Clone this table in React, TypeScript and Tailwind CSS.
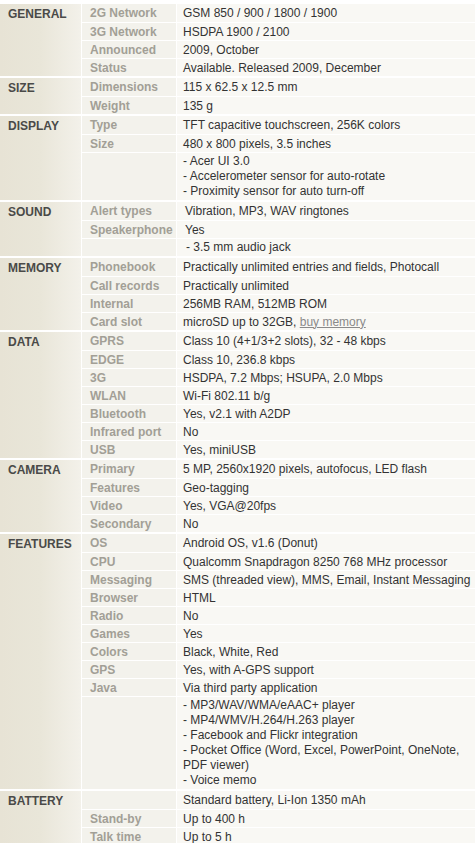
import React from 'react';

type Row = { label: string; value: React.ReactNode };
type Section = { title: string; rows: Row[]; notes?: string[]; shift?: boolean };

const sections: Section[] = [
  {
    title: 'GENERAL',
    rows: [
      { label: '2G Network', value: 'GSM 850 / 900 / 1800 / 1900' },
      { label: '3G Network', value: 'HSDPA 1900 / 2100' },
      { label: 'Announced', value: '2009, October' },
      { label: 'Status', value: 'Available. Released 2009, December' },
    ],
  },
  {
    title: 'SIZE',
    rows: [
      { label: 'Dimensions', value: '115 x 62.5 x 12.5 mm' },
      { label: 'Weight', value: '135 g' },
    ],
  },
  {
    title: 'DISPLAY',
    rows: [
      { label: 'Type', value: 'TFT capacitive touchscreen, 256K colors' },
      { label: 'Size', value: '480 x 800 pixels, 3.5 inches' },
    ],
    notes: ['- Acer UI 3.0', '- Accelerometer sensor for auto-rotate', '- Proximity sensor for auto turn-off'],
  },
  {
    title: 'SOUND',
    shift: true,
    rows: [
      { label: 'Alert types', value: 'Vibration, MP3, WAV ringtones' },
      { label: 'Speakerphone', value: 'Yes' },
    ],
    notes: ['- 3.5 mm audio jack'],
  },
  {
    title: 'MEMORY',
    rows: [
      { label: 'Phonebook', value: 'Practically unlimited entries and fields, Photocall' },
      { label: 'Call records', value: 'Practically unlimited' },
      { label: 'Internal', value: '256MB RAM, 512MB ROM' },
      {
        label: 'Card slot',
        value: (
          <span>
            microSD up to 32GB, <a className="text-[#8a8a8a] underline">buy memory</a>
          </span>
        ),
      },
    ],
  },
  {
    title: 'DATA',
    rows: [
      { label: 'GPRS', value: 'Class 10 (4+1/3+2 slots), 32 - 48 kbps' },
      { label: 'EDGE', value: 'Class 10, 236.8 kbps' },
      { label: '3G', value: 'HSDPA, 7.2 Mbps; HSUPA, 2.0 Mbps' },
      { label: 'WLAN', value: 'Wi-Fi 802.11 b/g' },
      { label: 'Bluetooth', value: 'Yes, v2.1 with A2DP' },
      { label: 'Infrared port', value: 'No' },
      { label: 'USB', value: 'Yes, miniUSB' },
    ],
  },
  {
    title: 'CAMERA',
    rows: [
      { label: 'Primary', value: '5 MP, 2560x1920 pixels, autofocus, LED flash' },
      { label: 'Features', value: 'Geo-tagging' },
      { label: 'Video', value: 'Yes, VGA@20fps' },
      { label: 'Secondary', value: 'No' },
    ],
  },
  {
    title: 'FEATURES',
    rows: [
      { label: 'OS', value: 'Android OS, v1.6 (Donut)' },
      { label: 'CPU', value: 'Qualcomm Snapdragon 8250 768 MHz processor' },
      { label: 'Messaging', value: 'SMS (threaded view), MMS, Email, Instant Messaging' },
      { label: 'Browser', value: 'HTML' },
      { label: 'Radio', value: 'No' },
      { label: 'Games', value: 'Yes' },
      { label: 'Colors', value: 'Black, White, Red' },
      { label: 'GPS', value: 'Yes, with A-GPS support' },
      { label: 'Java', value: 'Via third party application' },
    ],
    notes: [
      '- MP3/WAV/WMA/eAAC+ player',
      '- MP4/WMV/H.264/H.263 player',
      '- Facebook and Flickr integration',
      '- Pocket Office (Word, Excel, PowerPoint, OneNote, PDF viewer)',
      '- Voice memo',
    ],
  },
  {
    title: 'BATTERY',
    rows: [
      { label: '', value: 'Standard battery, Li-Ion 1350 mAh' },
      { label: 'Stand-by', value: 'Up to 400 h' },
      { label: 'Talk time', value: 'Up to 5 h' },
    ],
  },
];

const SpecSection: React.FC<{ section: Section }> = ({ section }) => (
  <div className="flex border-t-2 border-white">
    <div className="w-[81px] shrink-0 bg-gradient-to-r from-[#e7e3d5] via-[#e9e6d9] to-[#f3f1ea] pl-[8px] pt-[3px] font-bold text-[#4a4a48]">
      {section.title}
    </div>
    <div className="flex-1 min-w-0 border-l border-white">
      {section.rows.map((row, i) => (
        <div key={i} className={`flex h-[18px] items-center ${i > 0 ? 'border-t border-white' : ''}`}>
          <div className="w-[94px] shrink-0 self-stretch flex items-center bg-[#f3f2ec] pl-[8px] font-bold text-[#a29f96]">
            {row.label}
          </div>
          <div className={`flex-1 self-stretch flex items-center whitespace-nowrap border-l border-white bg-[#f9f8f4] text-[#333] ${section.shift ? 'pl-[8px]' : 'pl-[6px]'}`}>
            {row.value}
          </div>
        </div>
      ))}
      {section.notes && (
        <div className="flex border-t border-white">
          <div className="w-[94px] shrink-0 bg-[#f3f2ec]" />
          <div className={`flex-1 border-l border-white bg-[#f9f8f4] pt-[1px] pb-[1px] pr-[4px] leading-[15px] text-[#333] ${section.shift ? 'pl-[9px]' : 'pl-[6px]'}`}>
            {section.notes.map((n, i) => (
              <div key={i}>{n}</div>
            ))}
          </div>
        </div>
      )}
    </div>
  </div>
);

export default function App() {
  return (
    <div className="w-[475px] h-[843px] overflow-hidden bg-white pt-[2px] text-[12px] leading-[14px] font-['Liberation_Sans',Arial,sans-serif]">
      {sections.map((s) => (
        <SpecSection key={s.title} section={s} />
      ))}
    </div>
  );
}
